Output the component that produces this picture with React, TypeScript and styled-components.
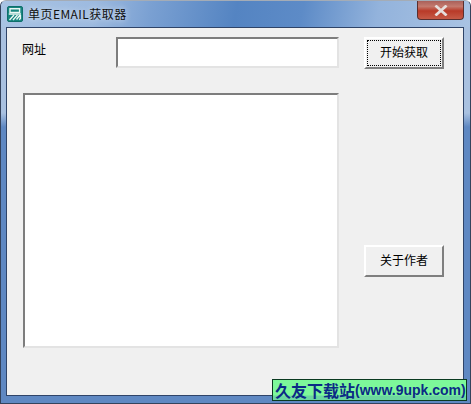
import React from "react";
import styled, { createGlobalStyle } from "styled-components";

const Global = createGlobalStyle`
  html, body { margin: 0; padding: 0; background: #ffffff; }
  body { width: 471px; height: 404px; overflow: hidden; font-family: "Noto Sans CJK SC", "Liberation Sans", sans-serif; }
`;

const Frame = styled.div`
  position: relative;
  box-sizing: border-box;
  width: 471px;
  height: 404px;
  padding: 0 6px 7px 5px;
  display: flex;
  flex-direction: column;
  border: 1px solid #34435c;
  border-top: 1px solid #a4acb6;
  border-radius: 6px 6px 0 0;
  background: linear-gradient(180deg, #a9c1e0 0, #a9c1e0 112px, #5f88c2 126px, #5f88c2 100%);
  overflow: hidden;
`;

const TitleBar = styled.div`
  flex: none;
  height: 26px;
  margin: 0 -6px 0 -5px;
  padding: 0 6px 0 6px;
  display: flex;
  align-items: center;
  gap: 5px;
  background: linear-gradient(100deg, #a9c4e4 0%, #9dbadf 20%, #7aa0d2 32%, #5484c2 50%, #5d8bc7 64%, #93b3dc 80%, #a9c3e3 100%);
`;

const AppIcon = styled.svg`
  flex: none;
  width: 16px;
  height: 16px;
`;

const TitleText = styled.span`
  flex: 1;
  margin-top: -1px;
  font-size: 12px;
  letter-spacing: 0.45px;
  line-height: 16px;
  color: #101010;
  text-shadow: 0 0 6px rgba(255, 255, 255, 0.75);
`;

const CloseButton = styled.div`
  flex: none;
  width: 47px;
  height: 19px;
  margin: -7px 0 0 0;
  box-sizing: border-box;
  display: flex;
  align-items: center;
  justify-content: center;
  border: 1px solid #5a2f2e;
  border-top: none;
  border-radius: 0 0 4px 4px;
  background: linear-gradient(#a9605a 0%, #c47a6e 30%, #b93a28 55%, #c65a46 100%);
`;

const Client = styled.div`
  flex: 1;
  display: flex;
  box-sizing: border-box;
  background: #f0f0f0;
  border: 1px solid #2f4468;
  padding: 9px 19px 47px 16px;
  gap: 25px;
`;

const LeftColumn = styled.div`
  width: 316px;
  display: flex;
  flex-direction: column;
  gap: 25px;
`;

const UrlRow = styled.div`
  display: flex;
  align-items: flex-start;
`;

const UrlLabel = styled.label`
  width: 94px;
  margin: 3px 0 0 -1px;
  font-size: 12px;
  line-height: 18px;
  color: #000;
`;

const sunken = `
  box-sizing: border-box;
  background: #fff;
  border: 2px solid;
  border-color: #7d7d7d #e3e3e3 #e3e3e3 #7d7d7d;
`;

const UrlField = styled.div`
  ${sunken}
  width: 223px;
  height: 31px;
`;

const ListField = styled.div`
  ${sunken}
  flex: 1;
  width: 316px;
`;

const RightColumn = styled.div`
  width: 80px;
  display: flex;
  flex-direction: column;
`;

const WinButton = styled.button<{ $focus?: boolean }>`
  box-sizing: border-box;
  width: 80px;
  height: 32px;
  padding: 0 0 3px 0;
  background: #f0f0f0;
  border: 2px solid;
  border-color: #fff #7f7f7f #7f7f7f #fff;
  font-family: "Noto Sans CJK SC", sans-serif;
  font-size: 12px;
  color: #000;
  outline: ${(p) => (p.$focus ? "1px dotted #000" : "none")};
  outline-offset: -4px;
`;

const ButtonGap = styled.div`
  height: 176px;
`;

const Watermark = styled.div`
  position: absolute;
  left: 271px;
  top: 378px;
  box-sizing: border-box;
  width: 195px;
  height: 22px;
  display: flex;
  align-items: center;
  padding-left: 2px;
  background: linear-gradient(#7df89a 0, #7df89a 15px, #6cd7a0 16px, #6cd7a0 100%);
  border: 1px solid #0a3a20;
  color: #0b2a86;
  font-weight: 700;
  white-space: nowrap;
`;

const WatermarkCjk = styled.span`
  font-size: 16px;
  line-height: 20px;
  font-family: "Noto Sans CJK SC", sans-serif;
`;

const WatermarkLatin = styled.span`
  font-size: 14px;
  line-height: 20px;
  font-family: "Liberation Sans", sans-serif;
`;

export default function App() {
  return (
    <>
      <Global />
      <Frame>
        <TitleBar>
          <AppIcon viewBox="0 0 16 16">
            <rect x="0.5" y="0.5" width="15" height="15" rx="1.5" fill="#17867f" stroke="#0f6f6a" />
            <path d="M3 2.8h9.6v3.6H3zM1.8 8h12.2" fill="none" stroke="#eaf7f3" strokeWidth="1.4" />
            <path d="M2.5 14l4.5-5M6 14l4.5-5M9.5 13.5l3.5-4.5M13.4 9v3.5l-1.2 1.3" fill="none" stroke="#eaf7f3" strokeWidth="1.4" />
          </AppIcon>
          <TitleText>单页EMAIL获取器</TitleText>
          <CloseButton>
            <svg width="14" height="11" viewBox="0 0 14 11">
              <path d="M2.5 1.5L11.5 9.5M11.5 1.5L2.5 9.5" stroke="#e6dedc" strokeWidth="2.8" strokeLinecap="square" />
            </svg>
          </CloseButton>
        </TitleBar>
        <Client>
          <LeftColumn>
            <UrlRow>
              <UrlLabel>网址</UrlLabel>
              <UrlField />
            </UrlRow>
            <ListField />
          </LeftColumn>
          <RightColumn>
            <WinButton $focus>开始获取</WinButton>
            <ButtonGap />
            <WinButton>关于作者</WinButton>
          </RightColumn>
        </Client>
        <Watermark>
          <WatermarkCjk>久友下载站</WatermarkCjk>
          <WatermarkLatin>(www.9upk.com)</WatermarkLatin>
        </Watermark>
      </Frame>
    </>
  );
}
